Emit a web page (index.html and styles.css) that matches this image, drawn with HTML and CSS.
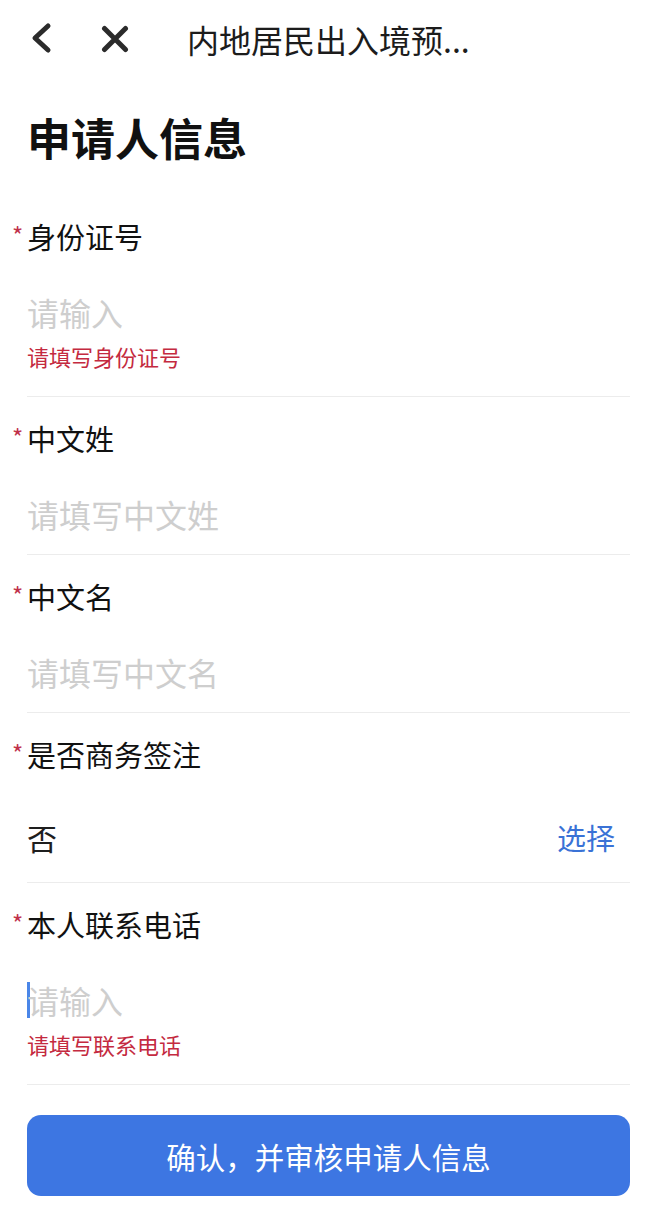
FILE: index.html
```html
<!DOCTYPE html>
<html lang="zh-CN">
    <head>
        <meta charset="UTF-8">
        <meta name="viewport" content="width=device-width, initial-scale=1.0">
        <title>申请人信息</title>
        <link rel="stylesheet" href="styles.css">
    </head>
    <body>
        <div class="nav">
            <span class="nav-icon back">
                <svg width="24" height="34" viewBox="0 0 24 34">
                    <path d="M18 4 L5 16 L18 28" fill="none" stroke="#2b2b2b" stroke-width="5" stroke-linecap="round" stroke-linejoin="round"/>
                </svg>
            </span>
            <span class="nav-icon close">
                <svg width="28" height="28" viewBox="0 0 28 28">
                    <path d="M3.5 3.5 L24.5 24.5 M24.5 3.5 L3.5 24.5" fill="none" stroke="#2b2b2b" stroke-width="5" stroke-linecap="round"/>
                </svg>
            </span>
            <span class="nav-title">内地居民出入境预...</span>
        </div>

        <h1 class="page-title">申请人信息</h1>

        <div class="form">
            <div class="field">
                <div class="label"><span class="req">*</span>身份证号</div>
                <div class="input placeholder">请输入</div>
                <div class="error">请填写身份证号</div>
            </div>
            <div class="field">
                <div class="label"><span class="req">*</span>中文姓</div>
                <div class="input placeholder">请填写中文姓</div>
            </div>
            <div class="field">
                <div class="label"><span class="req">*</span>中文名</div>
                <div class="input placeholder">请填写中文名</div>
            </div>
            <div class="field">
                <div class="label"><span class="req">*</span>是否商务签注</div>
                <div class="input select">
                    <span class="value">否</span>
                    <span class="pick">选择</span>
                </div>
            </div>
            <div class="field">
                <div class="label"><span class="req">*</span>本人联系电话</div>
                <div class="input placeholder"><span class="cursor"></span>请输入</div>
                <div class="error">请填写联系电话</div>
            </div>
        </div>

        <button class="submit">确认，并审核申请人信息</button>
    </body>
</html>
```

FILE: styles.css
```css
body {
    margin: 0;
    background-color: #fff;
    font-family: "Noto Sans CJK SC", "Noto Sans", sans-serif;
    color: #111;
}
.nav {
    height: 78px;
    display: flex;
    align-items: center;
}
.nav-icon {
    display: flex;
    align-items: center;
}
.nav-icon.back {
    margin-left: 30px;
}
.nav-icon.close {
    margin-left: 47px;
}
.nav-title {
    margin-left: 58px;
    font-size: 32px;
    color: #1c1c1c;
}
.page-title {
    margin: 33px 0 0 27px;
    font-size: 44px;
    line-height: 52px;
    font-weight: 700;
}
.form {
    margin: 32px 28px 0 27px;
}
.field {
    border-bottom: 1px solid #ececec;
    padding: 21px 0 18px;
}
.label {
    margin-left: -15px;
    display: flex;
    align-items: center;
    font-size: 29px;
    line-height: 40px;
}
.req {
    width: 15px;
    color: #c0304a;
    font-size: 24px;
    line-height: 24px;
    margin-top: -3px;
}
.input {
    margin-top: 34px;
    font-size: 32px;
    line-height: 44px;
}
.placeholder {
    color: #cecece;
    display: flex;
    align-items: center;
}
.cursor {
    width: 3px;
    height: 36px;
    background-color: #4a86e8;
    margin-right: -3px;
}
.select {
    margin-top: 41px;
    padding-bottom: 5px;
    display: flex;
    justify-content: space-between;
    align-items: center;
}
.value {
    color: #1e1e1e;
    font-size: 30px;
}
.pick {
    color: #3a72d6;
    font-size: 29px;
    margin-right: 15px;
}
.error {
    margin: 7px 0 7px;
    font-size: 22px;
    line-height: 30px;
    color: #c42a40;
}
.submit {
    display: block;
    margin: 30px 28px 0 27px;
    width: calc(100% - 55px);
    height: 81px;
    border: none;
    border-radius: 14px;
    background-color: #3d76e2;
    color: #fff;
    font-family: inherit;
    font-size: 29.5px;
}
```
